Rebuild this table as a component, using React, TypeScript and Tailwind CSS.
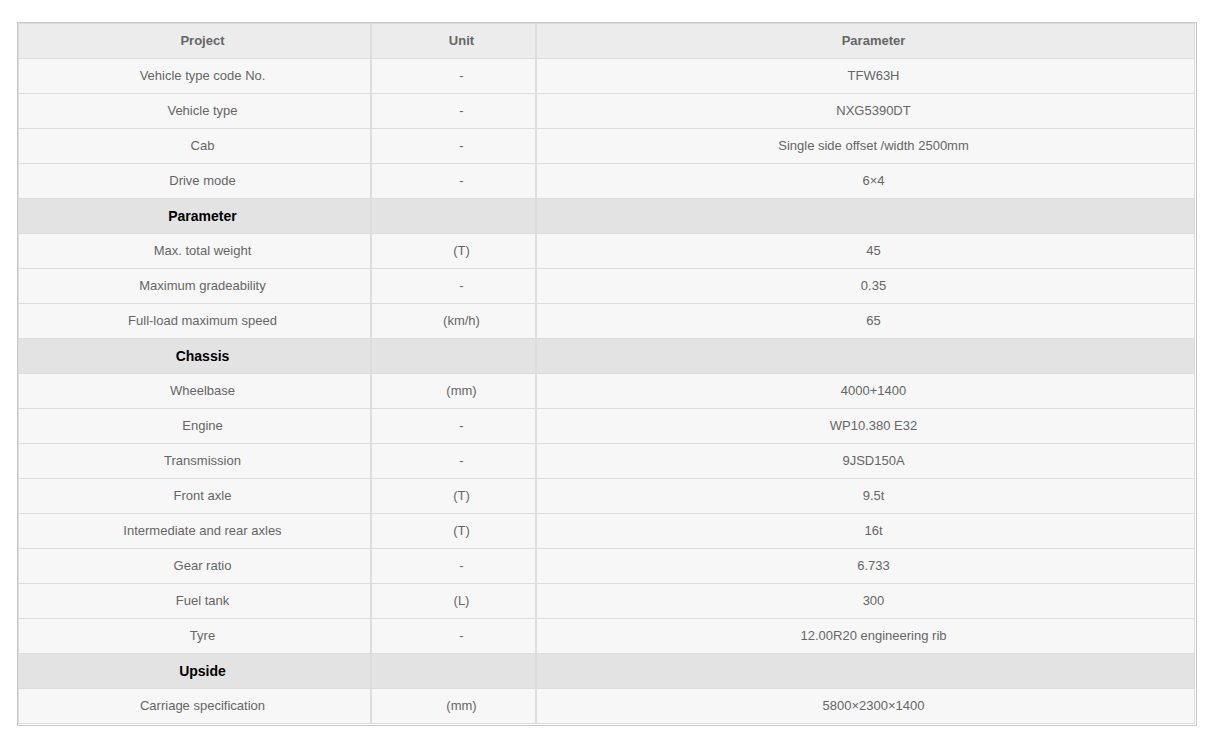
import React from "react";

type Row = { kind: "head" | "section" | "body"; a: string; b?: string; c?: string };

const rows: Row[] = [
  { kind: "head", a: "Project", b: "Unit", c: "Parameter" },
  { kind: "body", a: "Vehicle type code No.", b: "-", c: "TFW63H" },
  { kind: "body", a: "Vehicle type", b: "-", c: "NXG5390DT" },
  { kind: "body", a: "Cab", b: "-", c: "Single side offset /width 2500mm" },
  { kind: "body", a: "Drive mode", b: "-", c: "6×4" },
  { kind: "section", a: "Parameter" },
  { kind: "body", a: "Max. total weight", b: "(T)", c: "45" },
  { kind: "body", a: "Maximum gradeability", b: "-", c: "0.35" },
  { kind: "body", a: "Full-load maximum speed", b: "(km/h)", c: "65" },
  { kind: "section", a: "Chassis" },
  { kind: "body", a: "Wheelbase", b: "(mm)", c: "4000+1400" },
  { kind: "body", a: "Engine", b: "-", c: "WP10.380 E32" },
  { kind: "body", a: "Transmission", b: "-", c: "9JSD150A" },
  { kind: "body", a: "Front axle", b: "(T)", c: "9.5t" },
  { kind: "body", a: "Intermediate and rear axles", b: "(T)", c: "16t" },
  { kind: "body", a: "Gear ratio", b: "-", c: "6.733" },
  { kind: "body", a: "Fuel tank", b: "(L)", c: "300" },
  { kind: "body", a: "Tyre", b: "-", c: "12.00R20 engineering rib" },
  { kind: "section", a: "Upside" },
  { kind: "body", a: "Carriage specification", b: "(mm)", c: "5800×2300×1400" },
];

function Cell({ text, kind, first, bold }: { text?: string; kind: Row["kind"]; first: boolean; bold?: boolean }) {
  const bg = kind === "head" ? "bg-[#ececec]" : kind === "section" ? "bg-[#e3e3e3]" : "bg-[#f7f7f7]";
  const txt =
    kind === "head"
      ? "font-bold text-[13px] text-[#666]"
      : kind === "section" && bold
      ? "font-bold text-[14px] text-black"
      : "text-[13px] text-[#666]";
  return (
    <div
      className={`h-[35px] ${first ? "h-[36px] border-t" : ""} border-l border-r border-b border-[#dddddd] ${bg} ${txt} flex items-center justify-center pl-4`}
    >
      {text}
    </div>
  );
}

export default function App() {
  return (
    <div className="bg-white min-h-[738px] w-[1217px] pt-[22px] pl-[17px]" style={{ fontFamily: "Arial, 'Liberation Sans', sans-serif" }}>
      <div className="w-[1180px] border-t border-l border-r border-b border-[#c8c8c8] pr-px pb-px bg-white">
        <div className="grid grid-cols-[353px_165px_659px]">
          {rows.map((r, i) => (
            <React.Fragment key={i}>
              <Cell text={r.a} kind={r.kind} first={i === 0} bold />
              <Cell text={r.b} kind={r.kind} first={i === 0} />
              <Cell text={r.c} kind={r.kind} first={i === 0} />
            </React.Fragment>
          ))}
        </div>
      </div>
    </div>
  );
}
